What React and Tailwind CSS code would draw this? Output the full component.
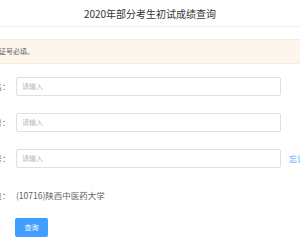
import React from 'react';

const font = { fontFamily: '"Noto Sans CJK SC", "Liberation Sans", sans-serif' };

const Label = ({ text }) => (
  <div className="w-[10px] shrink-0 flex justify-end overflow-hidden whitespace-nowrap text-[8px] text-[#606266]">
    {text}
  </div>
);

const Field = ({ label, extra }) => (
  <div className="flex items-center h-[19px]">
    <Label text={label} />
    <div className="ml-[6px] w-[265px] h-[19px] shrink-0 border border-[#dcdfe6] rounded-[2px] bg-white flex items-center px-[5px]">
      <span className="text-[7px] text-[#b4b7bd]">请输入</span>
    </div>
    {extra && (
      <span className="ml-[8px] text-[8px] text-[#409eff] whitespace-nowrap">{extra}</span>
    )}
  </div>
);

export default function App() {
  return (
    <div className="w-[300px] h-[240px] overflow-hidden bg-white" style={font}>
      {/* header */}
      <div className="h-[27px] border-b border-[#f0f0f0] flex items-center justify-center">
        <h1 className="text-[10px] text-[#333] font-normal">2020年部分考生初试成绩查询</h1>
      </div>

      {/* alert */}
      <div className="mt-[12px] h-[25px] bg-[#fdf6ec] border-y border-[#faecd8] flex items-center overflow-hidden whitespace-nowrap">
        <span className="ml-[-71px] text-[7px] text-[#606266]">姓名、身份证号、准考证号必填。</span>
      </div>

      {/* form */}
      <div className="mt-[13px] flex flex-col gap-[17px]">
        <Field label="姓名：" />
        <Field label="身份证号：" />
        <Field label="准考证号：" extra="忘记准考证号？" />
        <div className="flex items-center h-[19px] mt-[1px]">
          <Label text="报考单位：" />
          <span className="ml-[6px] text-[8.5px] text-[#606266] whitespace-nowrap">(10716)陕西中医药大学</span>
        </div>
      </div>

      <div className="mt-[13px] pl-[15px]">
        <button className="w-[33px] h-[19px] rounded-[2px] bg-[#409eff] text-white text-[7px] flex items-center justify-center">
          查询
        </button>
      </div>
    </div>
  );
}
